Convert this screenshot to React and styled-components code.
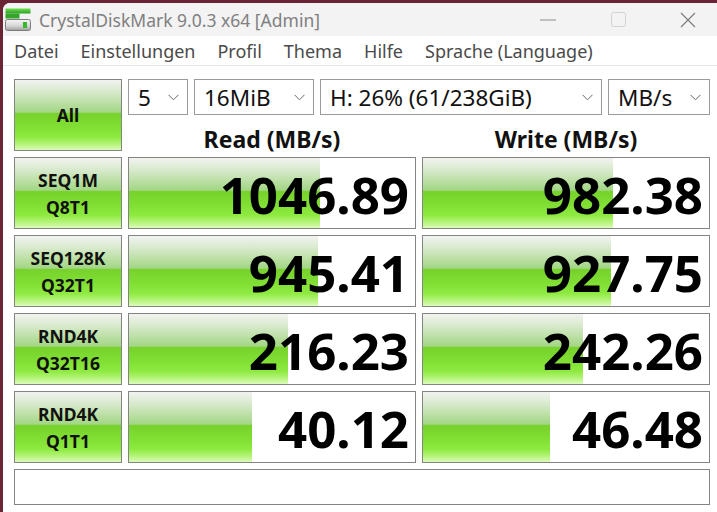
import { Fragment } from "react";
import styled, { createGlobalStyle } from "styled-components";

const GlobalStyle = createGlobalStyle`
  html, body {
    margin: 0;
    padding: 0;
    background: #6a2535;
    overflow: hidden;
  }
  * {
    box-sizing: border-box;
  }
`;

const Window = styled.div`
  margin: 3px 0 0 3px;
  width: 714px;
  height: 509px;
  background: #ffffff;
  border-top-left-radius: 7px;
  overflow: hidden;
  font-family: "Noto Sans", "Open Sans", sans-serif;
  display: flex;
  flex-direction: column;
`;

const TitleBar = styled.div`
  height: 33px;
  background: #f3f3f3;
  display: flex;
  align-items: center;
  padding-left: 2px;
`;

const Title = styled.span`
  margin-left: 8px;
  font-size: 17.5px;
  color: #808080;
  white-space: nowrap;
`;

const Controls = styled.div`
  margin-left: auto;
  margin-right: -6px;
  display: flex;
  height: 100%;
`;

const ControlButton = styled.div`
  width: 70px;
  height: 100%;
  display: flex;
  align-items: center;
  justify-content: center;
`;

const MenuBar = styled.div`
  height: 30px;
  display: flex;
  align-items: center;
  padding-top: 1px;
  border-bottom: 1px solid #e6e6e6;
`;

const MenuItem = styled.span`
  padding: 0 11px;
  font-size: 18px;
  color: #4a4a4a;
  white-space: nowrap;
`;

const Main = styled.div`
  padding: 13px 0 0 11px;
  display: grid;
  grid-template-columns: 108px 288px 288px;
  grid-template-rows: repeat(5, 72px) 36px;
  gap: 6px;
`;

const greenFace = `linear-gradient(
  180deg,
  #f2f3f0 0%,
  #d6e9ca 18%,
  #b5dd9c 36%,
  #a2d685 46%,
  #77d22c 48%,
  #80de33 66%,
  #8eea40 82%,
  #b6f47c 92%,
  #dcfcbc 100%
)`;

const GreenButton = styled.div`
  border: 1px solid #848484;
  background: ${greenFace};
  display: flex;
  flex-direction: column;
  align-items: center;
  justify-content: center;
  font-weight: 700;
  font-size: 17.5px;
  line-height: 27px;
  color: #111;
  padding-top: 1px;
`;

const TopControls = styled.div`
  grid-column: 2 / 4;
  display: flex;
  flex-direction: column;
`;

const SelectRow = styled.div`
  height: 36px;
  display: flex;
  gap: 6px;
`;

const Select = styled.div`
  width: ${({ $w }) => $w}px;
  height: 36px;
  border: 1px solid #9a9a9a;
  display: flex;
  align-items: center;
  justify-content: space-between;
  padding: 0 8px 0 9px;
  font-size: 22.5px;
  color: #111;
  white-space: nowrap;
`;

const HeaderRow = styled.div`
  height: 36px;
  display: grid;
  grid-template-columns: 288px 288px;
  gap: 6px;
`;

const Header = styled.div`
  text-align: center;
  font-weight: 700;
  font-size: 23px;
  line-height: 30px;
  padding-top: 9px;
  color: #111;
`;

const ResultCell = styled.div`
  border: 1px solid #848484;
  background-color: #ffffff;
  background-image: ${greenFace};
  background-repeat: no-repeat;
  background-size: ${({ $fill }) => $fill}px 100%;
  display: flex;
  align-items: center;
  justify-content: flex-end;
  padding: 3px 6px 0 0;
  font-weight: 700;
  font-size: 51px;
  line-height: 1;
  color: #000;
`;

const StatusBar = styled.div`
  grid-column: 1 / 4;
  border: 1px solid #848484;
  background: #fff;
`;

function AppIcon() {
  return (
    <svg width="26" height="24" viewBox="0 0 26 24">
      <defs>
        <linearGradient id="bar" x1="0" y1="0" x2="0" y2="1">
          <stop offset="0" stopColor="#6ee04a" />
          <stop offset="1" stopColor="#2f9f2a" />
        </linearGradient>
        <linearGradient id="drive" x1="0" y1="0" x2="0" y2="1">
          <stop offset="0" stopColor="#f6f6f6" />
          <stop offset="0.6" stopColor="#d4d4d4" />
          <stop offset="1" stopColor="#9c9c9c" />
        </linearGradient>
      </defs>
      <rect x="0.5" y="0.5" width="25" height="5" fill="url(#bar)" />
      <rect x="0.5" y="5.5" width="14" height="5" fill="#33a52b" />
      <rect x="0.5" y="11.5" width="25" height="11" rx="2" fill="url(#drive)" stroke="#7c7c7c" />
      <rect x="18" y="14" width="4" height="6" fill="#38b82a" />
    </svg>
  );
}

function Chevron() {
  return (
    <svg width="11" height="7" viewBox="0 0 11 7">
      <polyline points="0.5,0.8 5.5,5.8 10.5,0.8" fill="none" stroke="#666" strokeWidth="1" />
    </svg>
  );
}

const menu = ["Datei", "Einstellungen", "Profil", "Thema", "Hilfe", "Sprache (Language)"];

const selects = [
  { label: "5", w: 60 },
  { label: "16MiB", w: 120 },
  { label: "H: 26% (61/238GiB)", w: 282 },
  { label: "MB/s", w: 102 },
];

// bar length in px of the 286px inner cell width
const results = [
  { name: "SEQ1M", sub: "Q8T1", read: "1046.89", write: "982.38", rFill: 191, wFill: 190 },
  { name: "SEQ128K", sub: "Q32T1", read: "945.41", write: "927.75", rFill: 189, wFill: 188 },
  { name: "RND4K", sub: "Q32T16", read: "216.23", write: "242.26", rFill: 159, wFill: 160 },
  { name: "RND4K", sub: "Q1T1", read: "40.12", write: "46.48", rFill: 123, wFill: 127 },
];

export default function App() {
  return (
    <>
      <GlobalStyle />
      <Window>
        <TitleBar>
          <AppIcon />
          <Title>CrystalDiskMark 9.0.3 x64 [Admin]</Title>
          <Controls>
            <ControlButton>
              <svg width="16" height="2" viewBox="0 0 16 2">
                <line x1="0" y1="1" x2="16" y2="1" stroke="#8c8c8c" strokeWidth="1" />
              </svg>
            </ControlButton>
            <ControlButton>
              <svg width="15" height="15" viewBox="0 0 15 15">
                <rect x="0.5" y="0.5" width="14" height="14" rx="2" fill="none" stroke="#d2d2d2" />
              </svg>
            </ControlButton>
            <ControlButton>
              <svg width="16" height="16" viewBox="0 0 16 16">
                <path d="M1 1 L15 15 M15 1 L1 15" stroke="#7a7a7a" strokeWidth="1.1" />
              </svg>
            </ControlButton>
          </Controls>
        </TitleBar>
        <MenuBar>
          {menu.map((m) => (
            <MenuItem key={m}>{m}</MenuItem>
          ))}
        </MenuBar>
        <Main>
          <GreenButton>All</GreenButton>
          <TopControls>
            <SelectRow>
              {selects.map((s) => (
                <Select key={s.label} $w={s.w}>
                  <span>{s.label}</span>
                  <Chevron />
                </Select>
              ))}
            </SelectRow>
            <HeaderRow>
              <Header>Read (MB/s)</Header>
              <Header>Write (MB/s)</Header>
            </HeaderRow>
          </TopControls>
          {results.map((r) => (
            <Fragment key={r.name + r.sub}>
              <GreenButton>
                <span>{r.name}</span>
                <span>{r.sub}</span>
              </GreenButton>
              <ResultCell $fill={r.rFill}>{r.read}</ResultCell>
              <ResultCell $fill={r.wFill}>{r.write}</ResultCell>
            </Fragment>
          ))}
          <StatusBar />
        </Main>
      </Window>
    </>
  );
}
